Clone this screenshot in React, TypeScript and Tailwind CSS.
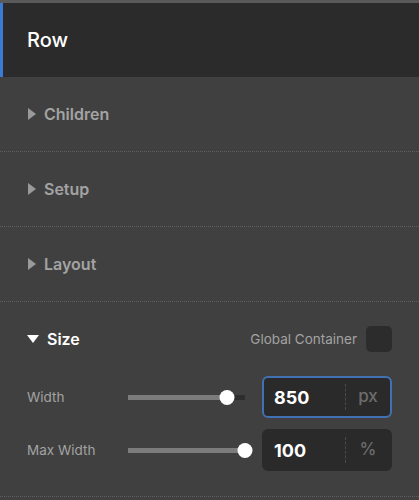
const font = { fontFamily: 'Inter, "Noto Sans", sans-serif' }

function Collapsed({ title }: { title: string }) {
  return (
    <div className="flex h-[75px] items-center gap-[8px] border-b border-dotted border-[#5e5e5e] pl-[28px]">
      <span className="h-0 w-0 border-y-[6px] border-l-[8px] border-y-transparent border-l-[#9a9a9a]" />
      <span className="text-[16px] font-semibold text-[#a3a3a3]">{title}</span>
    </div>
  )
}

function Slider({ pct }: { pct: number }) {
  return (
    <div className="relative h-[15px] w-[117px]">
      <div className="absolute left-0 right-0 top-[5px] h-[5px] bg-[#2d2d2d]" />
      <div className="absolute left-0 top-[5px] h-[5px] bg-[#7c7c7c]" style={{ width: `${pct}%` }} />
      <div
        className="absolute top-0 h-[15px] w-[15px] -translate-x-1/2 rounded-full bg-white"
        style={{ left: `${pct}%` }}
      />
    </div>
  )
}

function NumberBox({ value, unit, focused }: { value: string; unit: string; focused?: boolean }) {
  return (
    <div
      className={
        focused
          ? 'flex h-[42px] w-[130px] items-center rounded-[6px] border-2 border-[#4170b3] bg-[#2a2a2a]'
          : 'flex h-[42px] w-[130px] items-center rounded-[6px] border-2 border-[#2a2a2a] bg-[#2a2a2a]'
      }
    >
      <span className="w-[81px] pl-[10px] text-[18px] font-bold text-white">{value}</span>
      <span className="h-[26px] border-l border-dashed border-[#4a4a4a]" />
      <span className="flex-1 text-center text-[17px] font-medium text-[#6c6c6c]">{unit}</span>
    </div>
  )
}

export default function App() {
  return (
    <div className="h-[500px] w-[419px] overflow-hidden bg-[#404040]" style={font}>
      <div className="h-[3px] bg-[#5a5a5a]" />
      <div className="flex h-[74px] items-center border-l-[3px] border-[#3b7bd4] bg-[#2b2b2b] pl-[24px]">
        <span className="text-[20px] font-medium text-white">Row</span>
      </div>

      <Collapsed title="Children" />
      <Collapsed title="Setup" />
      <Collapsed title="Layout" />

      <div className="border-b border-dotted border-[#5e5e5e] pb-[25px]">
        <div className="flex h-[74px] items-center pl-[27px] pr-[27px]">
          <span className="h-0 w-0 border-x-[6px] border-t-[8px] border-x-transparent border-t-white" />
          <span className="ml-[8px] text-[16px] font-semibold text-white">Size</span>
          <span className="ml-auto text-[13.5px] text-[#a3a3a3]">Global Container</span>
          <span className="ml-[9px] h-[26px] w-[26px] rounded-[5px] bg-[#2c2c2c]" />
        </div>

        <div className="flex h-[42px] items-center pl-[27px] pr-[27px]">
          <span className="w-[101px] text-[13.5px] text-[#a3a3a3]">Width</span>
          <Slider pct={85} />
          <div className="ml-auto">
            <NumberBox value="850" unit="px" focused />
          </div>
        </div>

        <div className="mt-[11px] flex h-[42px] items-center pl-[27px] pr-[27px]">
          <span className="w-[101px] text-[13.5px] text-[#a3a3a3]">Max Width</span>
          <Slider pct={100} />
          <div className="ml-auto">
            <NumberBox value="100" unit="%" />
          </div>
        </div>
      </div>
    </div>
  )
}
